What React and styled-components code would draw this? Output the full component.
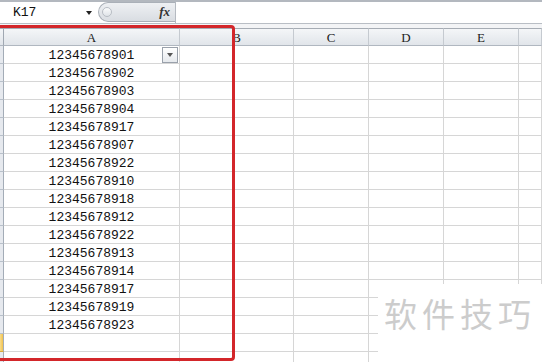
import React from "react";
import styled, { createGlobalStyle } from "styled-components";

const Global = createGlobalStyle`
  html, body { margin: 0; padding: 0; background: #fff; overflow: hidden; }
  * { box-sizing: border-box; }
`;

const Page = styled.div`
  position: relative;
  width: 542px;
  height: 362px;
  overflow: hidden;
  background: #fff;
  font-family: "Liberation Mono", "DejaVu Sans Mono", monospace;
`;

const FormulaBar = styled.div`
  display: flex;
  height: 24px;
  border-top: 2px solid #b3b8bf;
  border-bottom: 1px solid #b9bec5;
  background: #fff;
`;

const NameBox = styled.div`
  position: relative;
  width: 98px;
  display: flex;
  align-items: center;
  padding-left: 13px;
  font-size: 13px;
  color: #111;
`;

const NameArrow = styled.span`
  position: absolute;
  left: 86px;
  top: 9px;
  width: 0;
  height: 0;
  border-left: 3px solid transparent;
  border-right: 3px solid transparent;
  border-top: 4px solid #222;
`;

const FxPill = styled.div`
  width: 77px;
  height: 20px;
  margin-top: 0px;
  border: 1px solid #aab0b8;
  border-right: none;
  border-radius: 10px 0 0 10px;
  background: linear-gradient(#eef0f3, #d9dde2);
  display: flex;
  align-items: center;
  justify-content: space-between;
  padding: 0 5px 0 3px;
`;

const Grip = styled.span`
  width: 10px;
  height: 10px;
  border-radius: 50%;
  border: 1px solid #b8bdc4;
  background: linear-gradient(#fafbfc, #dfe3e8);
`;

const Fx = styled.span`
  font-family: "Liberation Serif", "DejaVu Serif", serif;
  font-style: italic;
  font-weight: bold;
  font-size: 13px;
  color: #333;
`;

const FormulaInput = styled.div`
  flex: 1;
  border-left: 1px solid #b5bac1;
  background: #fff;
`;

const Gap = styled.div`
  height: 4px;
  background: #f3f4f6;
`;

const Sheet = styled.div`
  display: grid;
  grid-template-columns: 4px 176px 114px 75px 75px 75px 1fr;
  grid-auto-rows: 18px;
`;

const HeadCell = styled.div`
  border-top: 1px solid #a6acb4;
  border-bottom: 1px solid #b0b7c0;
  border-right: 1px solid ${(p) => (p.$corner ? "#a0a8b2" : "#c5cad0")};
  background: linear-gradient(#f4f6f8, #e1e5ea);
  font-family: "Liberation Serif", "DejaVu Serif", serif;
  font-size: 13px;
  color: #222;
  display: flex;
  align-items: center;
  justify-content: center;
  line-height: 1;
`;

const RowHead = styled.div`
  border-right: 1px solid #a3acb7;
  border-bottom: 1px solid ${(p) => (p.$active ? "#d9a83a" : "#b8c0ca")};
  background: ${(p) =>
    p.$active ? "linear-gradient(90deg, #f9dc8a, #f1c24e)" : "#e6e9ee"};
`;

const Cell = styled.div`
  position: relative;
  border-right: 1px solid #d6d6d6;
  border-bottom: 1px solid #d6d6d6;
  font-size: 13px;
  color: #111;
  display: flex;
  align-items: center;
  justify-content: center;
  padding-top: 1px;
`;

const FilterButton = styled.span`
  position: absolute;
  left: 158px;
  top: 1px;
  width: 16px;
  height: 16px;
  border: 1px solid #9aa1ab;
  background: linear-gradient(#ffffff, #e6e9ed);
  display: flex;
  align-items: center;
  justify-content: center;
  &::after {
    content: "";
    border-left: 3px solid transparent;
    border-right: 3px solid transparent;
    border-top: 4px solid #555;
  }
`;

const Highlight = styled.div`
  position: absolute;
  left: -10px;
  top: 25px;
  width: 245px;
  height: 336px;
  border: 3px solid #d3262a;
  border-radius: 4px;
  pointer-events: none;
`;

const Watermark = styled.div`
  position: absolute;
  left: 378px;
  top: 284px;
  right: 0;
  bottom: 0;
  background: #fff;
  padding: 13px 0 0 6px;
  font-family: "Noto Sans CJK SC", sans-serif;
  font-size: 33px;
  letter-spacing: 5px;
  line-height: 1;
  color: #cccccc;
  white-space: nowrap;
`;

const values = [
  "12345678901",
  "12345678902",
  "12345678903",
  "12345678904",
  "12345678917",
  "12345678907",
  "12345678922",
  "12345678910",
  "12345678918",
  "12345678912",
  "12345678922",
  "12345678913",
  "12345678914",
  "12345678917",
  "12345678919",
  "12345678923",
  "",
  "",
];

const cols = ["A", "B", "C", "D", "E", "F"];

export default function App() {
  return (
    <Page>
      <Global />
      <FormulaBar>
        <NameBox>
          K17
          <NameArrow />
        </NameBox>
        <FxPill>
          <Grip />
          <Fx>fx</Fx>
        </FxPill>
        <FormulaInput />
      </FormulaBar>
      <Gap />
      <Sheet>
        <HeadCell $corner />
        {cols.map((c) => (
          <HeadCell key={c}>{c === "F" ? "" : c}</HeadCell>
        ))}
        {values.map((v, i) => (
          <React.Fragment key={i}>
            <RowHead $active={i === 16} />
            <Cell>
              {v}
              {i === 0 && <FilterButton />}
            </Cell>
            <Cell />
            <Cell />
            <Cell />
            <Cell />
            <Cell />
          </React.Fragment>
        ))}
      </Sheet>
      <Highlight />
      <Watermark>软件技巧</Watermark>
    </Page>
  );
}
